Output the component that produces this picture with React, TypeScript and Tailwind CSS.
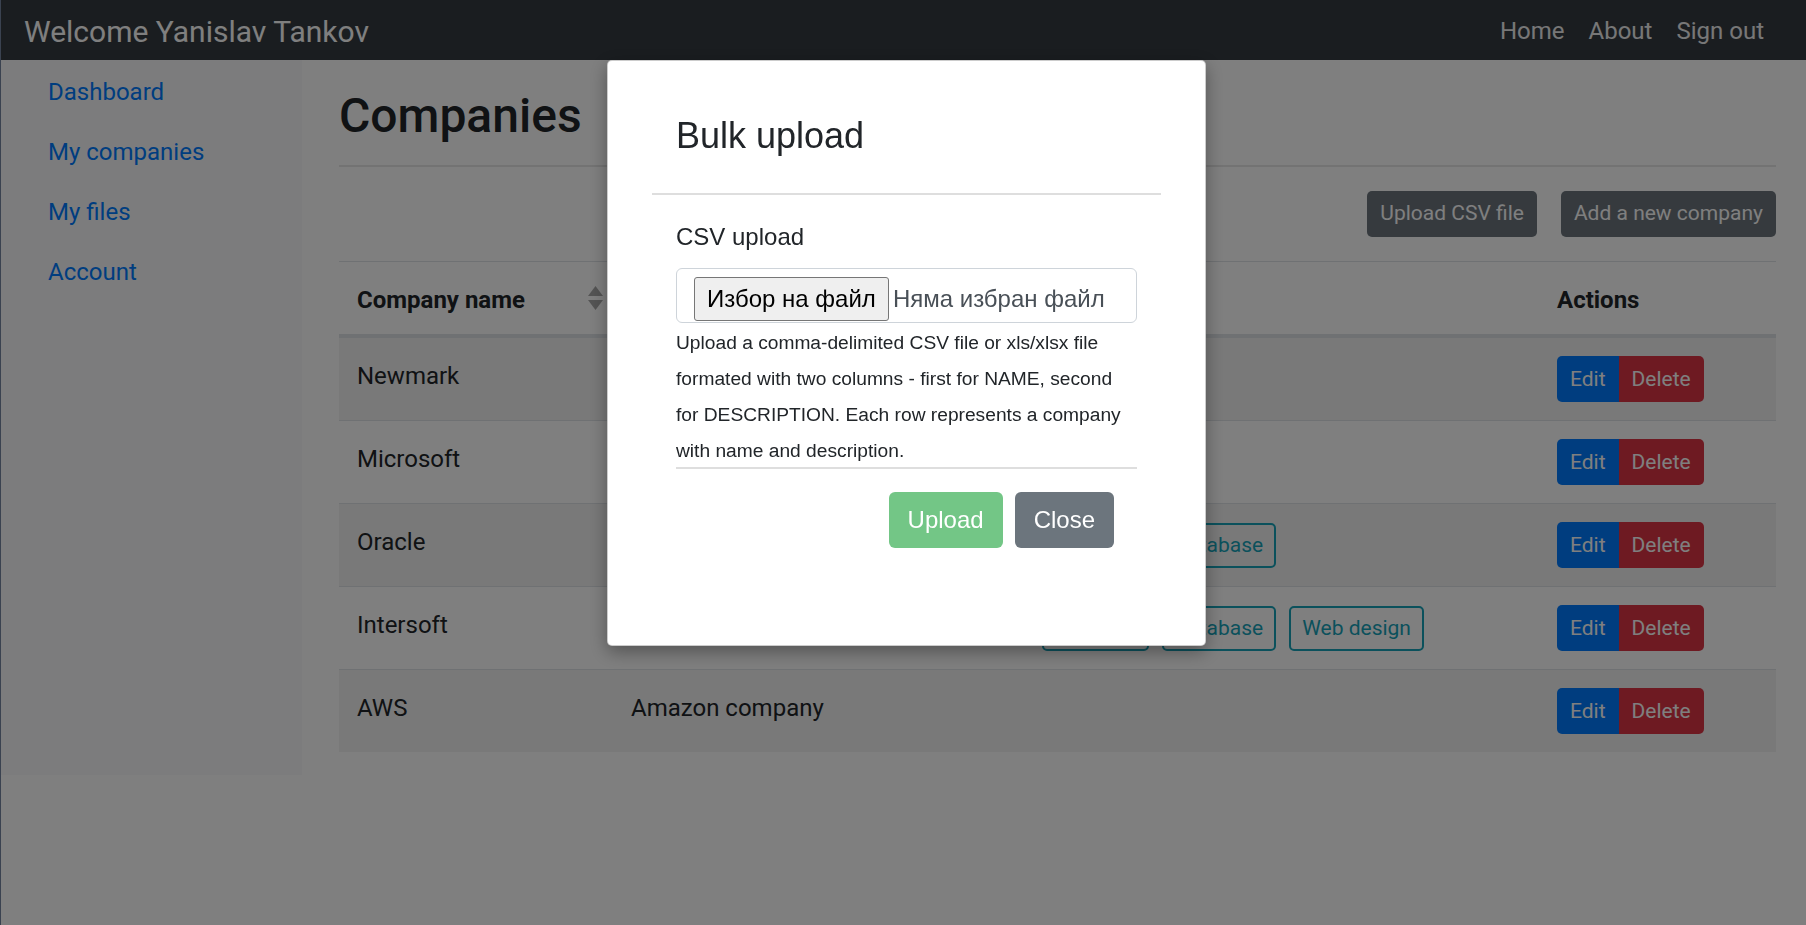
import React from "react";

const rows = [
  { name: "Newmark", desc: "Real estate company", tags: [] as string[] },
  { name: "Microsoft", desc: "Software company", tags: [] as string[] },
  { name: "Oracle", desc: "Database company", tags: ["Backend", "Database"] },
  { name: "Intersoft", desc: "IT company", tags: ["Backend", "Database", "Web design"] },
  { name: "AWS", desc: "Amazon company", tags: [] as string[] },
];

function SortIcon() {
  return (
    <svg width="15" height="24" viewBox="0 0 15 24" className="-mr-[8px] -mt-[4px] shrink-0">
      <path d="M7.5 0 L15 10 L0 10 Z" fill="#a9a9a9" />
      <path d="M0 14 L15 14 L7.5 24 Z" fill="#a9a9a9" />
    </svg>
  );
}

function BulkUploadModal() {
  return (
    <>
      <div className="fixed inset-0 z-40 bg-black/50" />
      <div className="fixed left-[607px] top-[60px] z-50 w-[599px] h-[586px] bg-white rounded-[5px] border border-black/20 shadow-[0_6px_18px_rgba(0,0,0,0.35)] px-[44px] pt-[53px] font-['Liberation_Sans',Arial,sans-serif] text-[#212529]">
        <h4 className="px-[24px] text-[36px] leading-[43px]">Bulk upload</h4>
        <div className="mt-[36px] border-t-2 border-[#dedede]" />
        <div className="px-[24px] pt-[24px]">
          <label className="block text-[24px] leading-[36px]">CSV upload</label>
          <div className="mt-[13px] h-[55px] flex items-start gap-[4px] border-[1.5px] border-[#ced4da] rounded-[6px] pl-[17px] pt-[8px]">
            <span className="h-[44px] px-[12px] bg-[#efefef] border border-[#767676] rounded-[3px] text-[24px] leading-[42px] text-black whitespace-nowrap">
              Избор на файл
            </span>
            <span className="text-[24px] leading-[44px] text-[#495057] whitespace-nowrap">Няма избран файл</span>
          </div>
          <p className="text-[24px] leading-[1.5] border-b-2 border-[#dedede]">
            <small className="text-[19.2px]">
              Upload a comma-delimited CSV file or xls/xlsx file formated with two columns - first for NAME, second for
              DESCRIPTION. Each row represents a company with name and description.
            </small>
          </p>
          <div className="mt-[23px] flex justify-end gap-[12px] pr-[23px]">
            <button className="h-[56px] px-[19px] rounded-[6px] bg-[#73c686] text-white text-[24px]">Upload</button>
            <button className="h-[56px] px-[19px] rounded-[6px] bg-[#6c757d] text-white text-[24px]">Close</button>
          </div>
        </div>
      </div>
    </>
  );
}

export default function App() {
  return (
    <div className="min-h-screen w-full bg-white border-l border-[#7484a0] font-['Roboto',sans-serif] text-[#212529]">
      <nav className="h-[60px] bg-[#343a40] flex items-center justify-between pl-[23px] pr-[30px]">
        <span className="text-[30px] leading-[45px] text-white pt-[2px]">Welcome Yanislav Tankov</span>
        <div className="flex items-center pt-[2px]">
          <a className="px-[12px] text-[24px] leading-[36px] text-[#eeeeef]">Home</a>
          <a className="px-[12px] text-[24px] leading-[36px] text-[#eeeeef]">About</a>
          <a className="px-[12px] text-[24px] leading-[36px] text-[#eeeeef]">Sign out</a>
        </div>
      </nav>

      <div className="flex">
        <aside className="w-[301px] h-[715px] shrink-0 bg-[#f8f9fa] pt-[2px]">
          <ul className="flex flex-col">
            {["Dashboard", "My companies", "My files", "Account"].map((l) => (
              <li key={l} className="pl-[47px] py-[12px] text-[24px] leading-[36px] text-[#007bff]">
                {l}
              </li>
            ))}
          </ul>
        </aside>

        <main className="flex-1 pl-[37px] pr-[30px]">
          <div className="pt-[27px] pb-[20px] border-b-2 border-[#e6e6e6]">
            <h2 className="text-[48px] leading-[58px] font-medium">Companies</h2>
          </div>

          <div className="mt-[24px] flex justify-end gap-[24px]">
            <button className="h-[46px] px-[13px] rounded-[5px] bg-[#6c757d] text-white text-[21px]">Upload CSV file</button>
            <button className="h-[46px] px-[13px] rounded-[5px] bg-[#6c757d] text-white text-[21px]">Add a new company</button>
          </div>

          <table className="mt-[24px] w-full table-fixed border-separate border-spacing-0 text-[24px] leading-[36px]">
            <thead>
              <tr>
                <th className="w-[274px] px-[18px] pt-[20px] pb-[16px] text-left font-bold border-t border-b-[3px] border-[#dee2e6]">
                  <div className="flex items-center justify-between">
                    <span>Company name</span>
                    <SortIcon />
                  </div>
                </th>
                <th className="w-[411px] px-[18px] pt-[20px] pb-[16px] text-left font-bold border-t border-b-[3px] border-[#dee2e6]">
                  Description
                </th>
                <th className="w-[515px] px-[18px] pt-[20px] pb-[16px] text-left font-bold border-t border-b-[3px] border-[#dee2e6]">
                  Tags
                </th>
                <th className="px-[18px] pt-[20px] pb-[16px] text-left font-bold border-t border-b-[3px] border-[#dee2e6]">
                  Actions
                </th>
              </tr>
            </thead>
            <tbody>
              {rows.map((r, i) => (
                <tr key={r.name} className={i % 2 === 0 ? "bg-[#f2f2f2]" : ""}>
                  <td className="px-[18px] py-[18px] align-middle border-t border-[#dee2e6]">
                    <div className="pb-[6px]">{r.name}</div>
                  </td>
                  <td className="px-[18px] py-[18px] align-middle border-t border-[#dee2e6]">
                    <div className="pb-[6px]">{r.desc}</div>
                  </td>
                  <td className="px-[18px] py-[18px] align-middle border-t border-[#dee2e6]">
                    <div className="flex gap-[13px]">
                      {r.tags.map((t) => (
                        <span
                          key={t}
                          className="h-[45px] px-[11px] flex items-center rounded-[5px] border-2 border-[#17a2b8] text-[#17a2b8] text-[21px] whitespace-nowrap"
                        >
                          {t}
                        </span>
                      ))}
                    </div>
                  </td>
                  <td className="px-[18px] py-[18px] align-middle border-t border-[#dee2e6]">
                    <div className="flex">
                      <button className="h-[46px] px-[13px] rounded-l-[5px] bg-[#007bff] text-white text-[21px]">Edit</button>
                      <button className="h-[46px] px-[13px] rounded-r-[5px] bg-[#dc3545] text-white text-[21px]">Delete</button>
                    </div>
                  </td>
                </tr>
              ))}
            </tbody>
          </table>
        </main>
      </div>

      <BulkUploadModal />
    </div>
  );
}
